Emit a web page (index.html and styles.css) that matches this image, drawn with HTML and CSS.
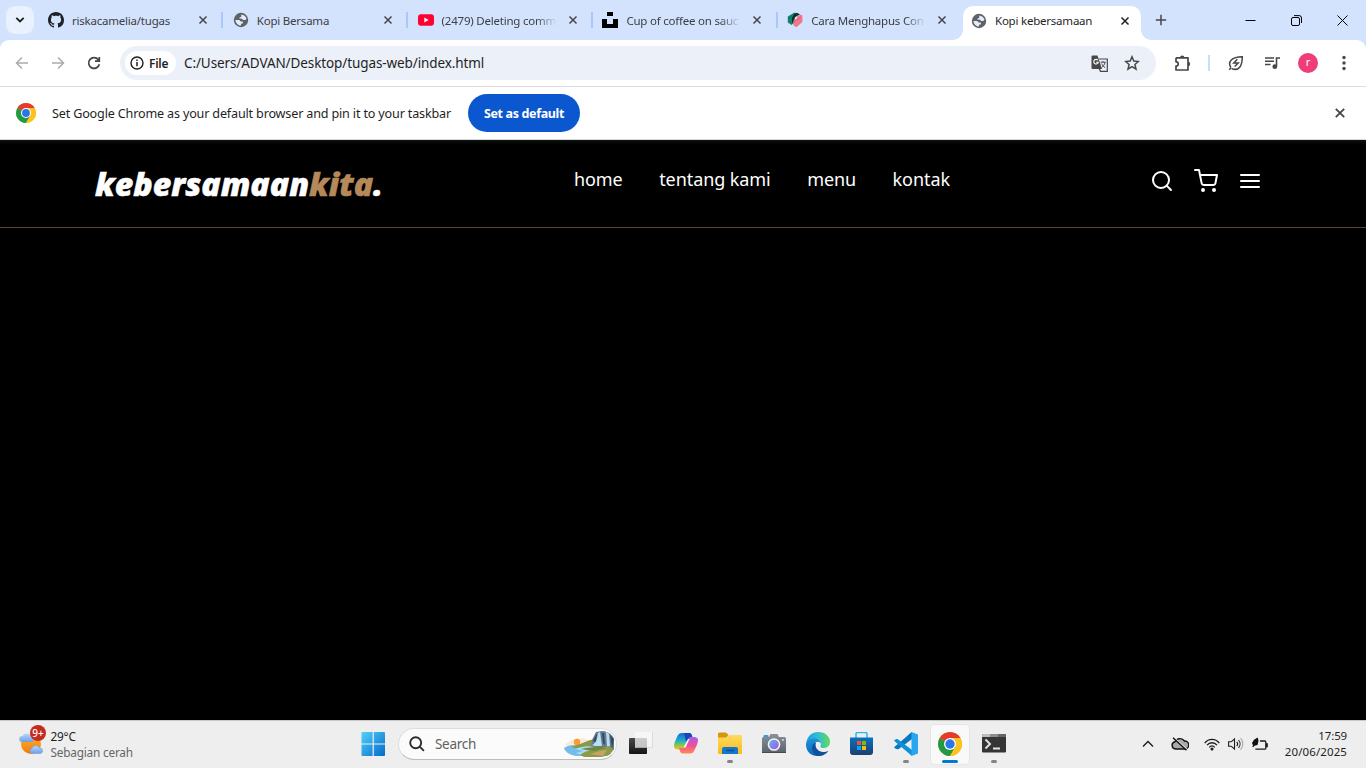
FILE: index.html
```html
<!DOCTYPE html>
<html lang="id">
<head>
<meta charset="utf-8">
<title>Kopi kebersamaan</title>
<link rel="stylesheet" href="styles.css">
</head>
<body>
<svg class="defs" width="0" height="0">
  <defs>
    <linearGradient id="gWin" x1="0" y1="0" x2="1" y2="1"><stop offset="0" stop-color="#4fd3fb"/><stop offset="1" stop-color="#0669c8"/></linearGradient>
    <linearGradient id="gSun" x1="0" y1="0" x2="0" y2="1"><stop offset="0" stop-color="#ffb52c"/><stop offset="1" stop-color="#f27a0c"/></linearGradient>
    <linearGradient id="gCloud" x1="0" y1="0" x2="0" y2="1"><stop offset="0" stop-color="#b9d8fb"/><stop offset="1" stop-color="#6d9fe8"/></linearGradient>
    <linearGradient id="gCopA" x1="0" y1="0" x2="0" y2="1"><stop offset="0" stop-color="#1467d8"/><stop offset=".5" stop-color="#22b3c9"/><stop offset=".75" stop-color="#8fc83c"/><stop offset="1" stop-color="#f4c521"/></linearGradient>
    <linearGradient id="gCopB" x1="0" y1="0" x2="0" y2="1"><stop offset="0" stop-color="#a95cf0"/><stop offset=".5" stop-color="#ee4f9d"/><stop offset="1" stop-color="#ff8a4a"/></linearGradient>
    <linearGradient id="gFold" x1="0" y1="0" x2="0" y2="1"><stop offset="0" stop-color="#ffdb62"/><stop offset="1" stop-color="#f9bb1c"/></linearGradient>
    <linearGradient id="gCam" x1="0" y1="0" x2="0" y2="1"><stop offset="0" stop-color="#8b929b"/><stop offset="1" stop-color="#5a626c"/></linearGradient>
    <linearGradient id="gLens" x1="0" y1="0" x2="1" y2="1"><stop offset="0" stop-color="#59b9f2"/><stop offset="1" stop-color="#a854e0"/></linearGradient>
    <linearGradient id="gEdgeA" x1="0" y1="0" x2="1" y2="0"><stop offset="0" stop-color="#1ba0e0"/><stop offset=".5" stop-color="#30bed0"/><stop offset="1" stop-color="#62dc58"/></linearGradient>
    <linearGradient id="gEdgeB" x1="0" y1="0" x2="0" y2="1"><stop offset="0" stop-color="#1693dc"/><stop offset="1" stop-color="#0e68bb"/></linearGradient>
    <linearGradient id="gStore" x1="0" y1="0" x2="0" y2="1"><stop offset="0" stop-color="#0a72c2"/><stop offset="1" stop-color="#1d3d70"/></linearGradient>
    <linearGradient id="gTaskA" x1="0" y1="0" x2="0" y2="1"><stop offset="0" stop-color="#4a4a4a"/><stop offset="1" stop-color="#141414"/></linearGradient>
    <symbol id="close" viewBox="0 0 10 10"><path d="M1.500 1.500l7 7M8.500 1.500l-7 7" fill="none" stroke="currentColor" stroke-width="1.500"/></symbol>
    <symbol id="globe" viewBox="0 0 16 16"><circle cx="8" cy="8" r="7.200" fill="#5f6368"/><path d="M8.200 2.400c2.500.2 4.600 1.700 5.300 4.100l-1.100 1.400-2.200.1-1.700-1.400-2 .1.100-1.300 1.700-.7zM2.400 8l3.900.1 1.500 1.300 2 .2.200 1.600-1.900.6-.2 1.800C4.800 13.400 2.600 11 2.400 8z" fill="#e3ecfb"/></symbol>
    <symbol id="chrome" viewBox="0 0 24 24">
      <circle cx="12" cy="12" r="12" fill="#fbc116"/>
      <path d="M12 12L1.610 6A12 12 0 0 1 22.390 6z" fill="#e33b2e"/>
      <path d="M12 12L1.610 6A12 12 0 0 0 12 24L17.200 15z" fill="#219a48"/>
      <path d="M12 6h10.400A12 12 0 0 1 12 24l5.200-9z" fill="#fcc31e"/>
      <circle cx="12" cy="12" r="6" fill="#fff"/><circle cx="12" cy="12" r="4.700" fill="#2a75ea"/>
    </symbol>
  </defs>
</svg>

<div class="screen">
  <header class="tabstrip">
    <button class="tab-search"><svg width="10" height="8" viewBox="0 0 10 8"><path d="M1.300 1.800L5 5.500 8.700 1.800" fill="none" stroke="#1f1f1f" stroke-width="1.800"/></svg></button>
    <div class="tabs">
      <div class="tab">
        <svg class="fav" viewBox="0 0 16 16"><path fill="#1f2328" d="M8 0C3.580 0 0 3.580 0 8c0 3.540 2.290 6.530 5.470 7.590.4.070.550-.170.550-.380 0-.190-.010-.820-.010-1.490-2.010.370-2.530-.490-2.690-.940-.090-.230-.480-.940-.820-1.130-.280-.150-.680-.520-.010-.530.630-.010 1.080.580 1.230.820.720 1.210 1.870.870 2.330.660.070-.520.280-.870.510-1.070-1.780-.2-3.640-.890-3.640-3.950 0-.870.310-1.590.820-2.150-.080-.2-.360-1.020.080-2.120 0 0 .670-.210 2.200.820.640-.180 1.320-.270 2-.270s1.360.090 2 .270c1.530-1.040 2.200-.820 2.200-.820.440 1.100.160 1.920.080 2.120.510.560.820 1.270.820 2.150 0 3.070-1.870 3.750-3.650 3.950.290.250.540.730.540 1.480 0 1.070-.010 1.930-.010 2.200 0 .210.150.460.550.380A8.010 8.010 0 0 0 16 8c0-4.420-3.580-8-8-8z"/></svg>
        <span class="tab-title">riskacamelia/tugas</span><svg class="x"><use href="#close"/></svg>
      </div>
      <div class="tab sep">
        <svg class="fav"><use href="#globe"/></svg>
        <span class="tab-title">Kopi Bersama</span><svg class="x"><use href="#close"/></svg>
      </div>
      <div class="tab sep">
        <svg class="fav" viewBox="0 0 16 16"><rect y="2.300" width="16" height="11.400" rx="3" fill="#ff0033"/><path d="M6.300 5.600v4.800L10.600 8z" fill="#fff"/></svg>
        <span class="tab-title fade">(2479) Deleting comm</span><svg class="x"><use href="#close"/></svg>
      </div>
      <div class="tab sep">
        <svg class="fav" viewBox="0 0 16 16"><path d="M5 0h6v4H5zM0 7h5v5h6V7h5v9H0z"/></svg>
        <span class="tab-title fade">Cup of coffee on sauc</span><svg class="x"><use href="#close"/></svg>
      </div>
      <div class="tab sep">
        <svg class="fav" viewBox="0 0 16 16"><path d="M7.500.500l2 1V4L6 6.500v5L4.500 13 .8 10.500v-6z" fill="#12806f"/><path d="M7 2l3-1.300L13 2.500 8 5l-1.500 7L5 10V6z" fill="#102e2b"/><path d="M10 4.500l4-2 1.400 1.200V10l-6 5.200-3-2V8.500l3.600-1.700z" fill="#f0788c"/><path d="M7 9.300l7-4" stroke="#d95670" stroke-width=".8"/></svg>
        <span class="tab-title fade">Cara Menghapus Con</span><svg class="x"><use href="#close"/></svg>
      </div>
      <div class="tab active">
        <svg class="fav"><use href="#globe"/></svg>
        <span class="tab-title">Kopi kebersamaan</span><svg class="x"><use href="#close"/></svg>
      </div>
    </div>
    <svg class="newtab" width="12" height="12" viewBox="0 0 12 12"><path d="M6 .8v10.400M.8 6h10.400" stroke="#474747" stroke-width="1.500"/></svg>
    <div class="window-buttons">
      <svg width="11" height="11" viewBox="0 0 11 11"><path d="M.5 5.500h10" stroke="#000"/></svg>
      <svg width="11" height="11" viewBox="0 0 11 11" fill="none" stroke="#000"><rect x=".5" y="2.500" width="8" height="8" rx="1.500"/><path d="M3 .6h5.200A2.300 2.300 0 0 1 10.500 3v5"/></svg>
      <svg width="11" height="11" viewBox="0 0 11 11"><path d="M.5.500l10 10M10.500.500l-10 10" stroke="#000"/></svg>
    </div>
  </header>

  <div class="toolbar">
    <div class="nav-buttons">
      <svg width="16" height="16" viewBox="0 0 16 16" fill="none" stroke="#ababab" stroke-width="1.500"><path d="M14 8H3M8 2.500L2.500 8 8 13.500"/></svg>
      <svg width="16" height="16" viewBox="0 0 16 16" fill="none" stroke="#ababab" stroke-width="1.500"><path d="M2 8h11M8 2.500L13.500 8 8 13.500"/></svg>
      <svg width="16" height="16" viewBox="0 0 16 16" fill="none" stroke="#474747" stroke-width="1.700"><path d="M13.300 9.200A5.400 5.400 0 1 1 12.300 4.700L13 5.800M13.300 2v4.200H9"/></svg>
    </div>
    <div class="omnibox">
      <div class="chip"><svg width="14" height="14" viewBox="0 0 14 14" fill="none" stroke="#1f1f1f"><circle cx="7" cy="7" r="6" stroke-width="1.400"/><path d="M7 6v4.300M7 3.500v1.400" stroke-width="1.500"/></svg><span>File</span></div>
      <span class="url">C:/Users/ADVAN/Desktop/tugas-web/index.html</span>
      <svg class="translate" width="17" height="17" viewBox="0 0 17 17"><path d="M1.500.500h5L11 14H1.500A1 1 0 0 1 .5 13V1.500a1 1 0 0 1 1-1z" fill="#474747"/><path d="M8 4h8.300v12.300H9.500L8.200 13.500" fill="none" stroke="#474747" stroke-width="1.200"/><path d="M6.900 5.200A2.300 2.300 0 1 0 7.300 7.300H5.200" fill="none" stroke="#fff" stroke-width="1.100"/><path d="M9.500 7.200h5.300M12 6v1.200M14 7.400c-.4 2.200-1.800 4-3.500 5.200M10.700 8.500c.6 1.700 1.800 3.200 3.400 4.200" fill="none" stroke="#474747"/></svg>
      <svg width="16" height="16" viewBox="0 0 16 16"><path d="M8 1.800l1.800 4.300 4.600.4-3.500 3 1.100 4.600L8 11.600l-4 2.500 1.100-4.600-3.500-3 4.600-.4z" fill="none" stroke="#474747" stroke-width="1.500"/></svg>
    </div>
    <svg class="ext" width="18" height="18" viewBox="0 0 18 18"><path d="M2 3.800h5.200M14 3.800v4.500M2 3.800v4c3 .2 3 4 0 4.200v4h12v-4.200V3.800H2" fill="none" stroke="#474747" stroke-width="1.700" stroke-linejoin="round"/><path d="M6 3.800a2.200 2.200 0 0 1 4.400 0zM14 7.700a2.200 2.200 0 0 1 0 4.400z" fill="#474747"/></svg>
    <i class="divider"></i>
    <svg class="leaf" width="16" height="16" viewBox="0 0 16 16" fill="none" stroke="#474747" stroke-width="1.500"><path d="M2.800 12.500C-.5 7 3.500 1.700 14.300 1.700c0 9.300-3.500 14.600-10.300 12M1.200 14.800l2.200-2.200M9.300 4.300L5.800 8h4.400l-3.500 3.500"/></svg>
    <svg class="queue" width="16" height="16" viewBox="0 0 16 16"><path d="M1 3h9M1 6.300h9M1 9.600h5.500" stroke="#474747" stroke-width="1.500"/><path d="M12.500 11.500V3H16" fill="none" stroke="#474747" stroke-width="1.600"/><circle cx="10.800" cy="11.700" r="2.400" fill="#474747"/></svg>
    <span class="avatar">r</span>
    <svg class="kebab" width="4" height="16" viewBox="0 0 4 16" fill="#474747"><circle cx="2" cy="2.500" r="1.700"/><circle cx="2" cy="8" r="1.700"/><circle cx="2" cy="13.500" r="1.700"/></svg>
  </div>

  <div class="infobar">
    <svg width="20" height="20"><use href="#chrome"/></svg>
    <span class="info-text">Set Google Chrome as your default browser and pin it to your taskbar</span>
    <button class="default-btn"><span>Set as default</span></button>
    <svg class="info-close" width="12" height="12"><use href="#close"/></svg>
  </div>

  <main class="page">
    <nav class="navbar">
      <a class="logo">kebersamaan<span>kita</span>.</a>
      <div class="links"><a>home</a><a>tentang kami</a><a>menu</a><a>kontak</a></div>
      <div class="extra">
        <svg viewBox="0 0 24 24"><circle cx="11" cy="11" r="8"/><path d="M21 21L16.650 16.650"/></svg>
        <svg viewBox="0 0 24 24"><circle cx="9" cy="21" r="1"/><circle cx="20" cy="21" r="1"/><path d="M1 1h4l2.680 13.390a2 2 0 0 0 2 1.610h9.720a2 2 0 0 0 2-1.610L23 6H6"/></svg>
        <svg viewBox="0 0 24 24"><path d="M3 6h18M3 12h18M3 18h18"/></svg>
      </div>
    </nav>
  </main>

  <footer class="taskbar">
    <div class="weather">
      <div class="weather-icon">
        <svg width="28" height="28" viewBox="0 0 28 28"><circle cx="13" cy="16" r="10" fill="url(#gSun)"/><path d="M4 14a3 3 0 0 1 .5-6A4.500 4.500 0 0 1 12 7a3.500 3.500 0 0 1 1 7z" fill="url(#gCloud)"/><path d="M13.500 25.500a2.600 2.600 0 0 1 0-4.800 4.300 4.300 0 0 1 8-.7 2.800 2.800 0 0 1 1 5.500z" fill="url(#gCloud)" stroke="#699be3" stroke-width=".5"/></svg>
        <b class="badge">9+</b>
      </div>
      <div class="weather-text"><span>29°C</span><span class="muted">Sebagian cerah</span></div>
    </div>
    <div class="dock">
      <svg class="start" width="24" height="24" viewBox="0 0 24 24" fill="url(#gWin)"><path d="M1.500 0H23a1 1 0 0 1 1 1v22a1 1 0 0 1-1 1H1.500A1 1 0 0 1 .5 23V1a1 1 0 0 1 1-1z"/><path d="M12.200 0v24M0 12h24" stroke="#eef0f2" stroke-width="1.200"/></svg>
      <div class="search">
        <svg width="16" height="16" viewBox="0 0 16 16" fill="none" stroke="#2b2b2b" stroke-width="1.900"><circle cx="6.700" cy="6.700" r="5.500"/><path d="M10.700 10.700l4.200 4.200"/></svg>
        <span>Search</span>
        <svg class="scene" width="52" height="26" viewBox="0 0 52 26">
          <path d="M2 14c4-5 11-6 18-7l13 5v7H12z" fill="#fbe8d6"/><circle cx="14" cy="11" r="3.200" fill="#ff9a2e"/>
          <path d="M1 17c5-4 12-2 18-3l15-1 12 12H13C7 24 2 21 1 17z" fill="#72bdea"/>
          <path d="M8 16l9-3 10-4 8-1 3 8-13 4z" fill="#89994a"/><path d="M29 9l4-8 6-1h7l5 6v13l-7 4-10-8-6 1z" fill="#667b8f"/>
          <path d="M35 2l2-1 2 14h-7l-3-1c3-1 5-5 6-12zM43 0l3 3 1 12-3 1z" fill="#b9dff5"/><path d="M30 10l4-8-1 9zM47 4l4 4-2 10zM39 2h2l1 12-2-2z" fill="#344b5f"/>
          <path d="M12 18c10-4 17-3 22-1l-9 4 6 4H21l-8-3 7-2z" fill="#a9daf4"/><path d="M17 24c7-6 19-6 28-9l6 3-4 6-8 2H21z" fill="#8b9b48"/><path d="M18 18c6-2 13-1 18-3l7 2-12 3z" fill="#6d8642"/><path d="M27 23c7-2 12-4 17-4l-4 6z" fill="#c7a366"/>
        </svg>
      </div>
      <div class="apps">
        <div class="app"><svg viewBox="0 0 24 24"><rect x="0" y="6" width="18" height="16" rx="1" fill="url(#gTaskA)"/><path d="M6 0h17.500v15.500H6z" fill="#f8f8f8" opacity=".75"/><path d="M6 15.500h17.500V0" fill="none" stroke="#ccc" stroke-width=".6"/></svg></div>
        <div class="app"><svg viewBox="0 0 24 24"><path d="M8 1h7c2 0 2.600 1 3.200 3L19 7h-3c-2 0-3 1-3.500 3l-2 5c-.7 2-1.500 2.500-3 2.500H4c-3 0-4-1.500-4-3.500 0-3 2.500-8 4-11C5 1.800 6 1 8 1z" fill="url(#gCopA)"/><path d="M16 21.500H9c-2 0-2.600-1-3.200-3L5 16h3c2 0 3-1 3.500-3L14 7.500C14.700 6 15.500 5 17 5h3c3 0 4 1.500 4 3.500 0 3-2.500 7.500-4 10.500-1 1.800-2 2.500-4 2.500z" fill="url(#gCopB)"/><path d="M10 1h5c2 0 2.600 1 3.200 4h-1.500c-1.500 0-2.300 1-2.700 2L12.500 10C11 7 11 4 10 1z" fill="#1746b5"/><path d="M14 7h1.500l-3.800 8.500H9.500z" fill="#fff" opacity=".9"/></svg></div>
        <div class="app"><svg viewBox="0 0 24 24"><path d="M0 2a1.500 1.500 0 0 1 1.500-1.500H8L10.500 3v3H0z" fill="#d99508"/><path d="M0 5.500h8L10.500 3H23a1 1 0 0 1 1 1v17a1 1 0 0 1-1 1H1a1 1 0 0 1-1-1z" fill="url(#gFold)"/><path d="M4 22v-5a2 2 0 0 1 2-2h12a2 2 0 0 1 2 2v5z" fill="#1378ca"/><path d="M8 18.500h8" stroke="#075393" stroke-width="1.500"/></svg><i class="dot"></i></div>
        <div class="app"><svg viewBox="0 0 24 24"><rect x="1.500" y="3" width="5" height="4" rx="1" fill="#20a4e8"/><path d="M1.500 5H7l1.500-3h7L17 5h5.500A1.500 1.500 0 0 1 24 6.500V21H0V6.500A1.500 1.500 0 0 1 1.500 5z" fill="url(#gCam)"/><path d="M0 20.500h24" stroke="#454b54"/><circle cx="12" cy="12.500" r="6.300" fill="#f5f5f7"/><circle cx="12" cy="12.500" r="4.800" fill="url(#gLens)"/><circle cx="21" cy="8" r="1" fill="#d6dade"/></svg></div>
        <div class="app"><svg class="edge" viewBox="0 0 24 24"><path d="M0 12C1 4 6 0 12 0c8 0 12 5 12 10 0 4-3 6-7 6-2 0-3-1-2.500-2 .4-1 .5-1.500.5-2.300C15 9 12.500 7 9 7c-5 0-9 2.500-9 5z" fill="url(#gEdgeA)"/><path d="M0 12.500C0 8.500 4 6.500 8.500 6.500c4 0 6.500 2.500 6.500 5.300-.5-1.300-1.700-2-3-2-2.500 0-4 2-4 4.500 0 4.500 3.500 7 7.500 9.200C7 25.500 0 21 0 12.500z" fill="url(#gEdgeB)"/><path d="M10 10.500C8 16 13 20 17 20c2.300 0 4-.6 5.500-1.300C20 22.500 16 24 13 24 8 24 6 19.500 6 16c0-2.500 1.500-5 4-5.500z" fill="#0d529b"/></svg></div>
        <div class="app"><svg viewBox="0 0 24 24"><path d="M6 7V2a1.500 1.500 0 0 1 1.500-1.500h8A1.500 1.500 0 0 1 17 2v5" fill="none" stroke="#29b9ef" stroke-width="1.500"/><path d="M0 5.500h23V20a3 3 0 0 1-3 3H3a3 3 0 0 1-3-3z" fill="url(#gStore)"/><path fill="#f35325" d="M7 9h4v4H7z"/><path fill="#81bc06" d="M12 9h4v4h-4z"/><path fill="#05a6f0" d="M7 14h4v4H7z"/><path fill="#ffba08" d="M12 14h4v4h-4z"/></svg></div>
        <div class="app"><svg viewBox="0 0 24 24"><path d="M17.500 0L2 15.500 4 17.500 18 7z" fill="#0878bf"/><path d="M0 15.200l2 1.800h1.500L18 6V0z" fill="#0878bf"/><path d="M0 8.800L2 7h1.500L18 18v6z" fill="#0c91d9"/><path d="M17.500 0L24 2.500v19L17.500 24z" fill="#28a7f0"/></svg><i class="dot"></i></div>
        <div class="app current"><svg viewBox="0 0 24 24"><use href="#chrome"/></svg><i class="dot"></i></div>
        <div class="app"><svg viewBox="0 0 24 24"><rect y="2" width="24" height="18.500" rx="1" fill="#353535"/><path d="M0 5V3a1 1 0 0 1 1-1h7v3z" fill="#bcbcbc"/><path d="M8 2h8v3H8z" fill="#8c8c8c"/><path d="M16 2h7a1 1 0 0 1 1 1v2h-8z" fill="#666"/><path d="M3.500 7.500L8 12l-4.500 4.500M11 16.500h7" stroke="#e3e3e3" stroke-width="1.900" fill="none"/></svg><i class="dot"></i></div>
      </div>
    </div>
    <div class="tray">
      <svg width="12" height="8" viewBox="0 0 12 8"><path d="M1 6.500L6 1.500l5 5" fill="none" stroke="#1a1a1a" stroke-width="1.300"/></svg>
      <svg class="cloud" width="18" height="14" viewBox="0 0 18 14"><path d="M4.500 12A3.700 3.700 0 0 1 4 4.700 5.500 5.500 0 0 1 13.500 4a4 4 0 0 1 .5 8z" fill="#aaa" stroke="#111" stroke-width="1.400"/><path d="M3 .6l13 11.800" stroke="#eee" stroke-width="1.200"/><path d="M2 .8l13.500 12.400" stroke="#111" stroke-width="1.400"/></svg>
      <svg class="wifi" width="16" height="13" viewBox="0 0 16 13" fill="none" stroke="#1d1d1d" stroke-width="1.300"><path d="M.7 5C4.700.2 11.300.2 15.300 5M3 7.200c2.700-3.300 7.300-3.300 10 0M5.300 9.300c1.400-1.800 4-1.800 5.400 0"/><circle cx="8" cy="11" r=".9" fill="#1d1d1d"/></svg>
      <svg class="sound" width="16" height="14" viewBox="0 0 16 14" fill="none" stroke="#1d1d1d" stroke-width="1.100"><path d="M.6 4.800h2.600L6.500 2v10L3.200 9.200H.6zM8.700 4.800a3.300 3.300 0 0 1 0 4.400M10.500 3a6 6 0 0 1 0 8"/><path d="M12.500 1.200a8.500 8.500 0 0 1 0 11.600" stroke="#aaa"/></svg>
      <svg class="battery" width="17" height="14" viewBox="0 0 17 14"><path d="M5 11.500v.7h8.800a1 1 0 0 0 1-1V5a1 1 0 0 0-1-1H9M15 7v2.500h1.200V7z" fill="none" stroke="#1a1a1a" stroke-width="1.300"/><path d="M6.800.5L3 2.800 1 6l1 2.300-.7 1.700h1.200L3.500 8.700 6.500 8 7.500 4z" fill="#111"/></svg>
      <div class="clock"><span>17:59</span><span class="date">20/06/2025</span></div>
    </div>
  </footer>
</div>
</body>
</html>
```

FILE: styles.css
```css
* { box-sizing: border-box; }
body { margin: 0; font-family: "Noto Sans", "Open Sans", sans-serif; font-size: 12px; color: #1f1f1f; overflow: hidden; }
svg { display: block; flex: none; }
.defs { position: absolute; }
button { border: 0; padding: 0; font: inherit; }
span { white-space: nowrap; }
.screen { width: 1366px; height: 768px; display: flex; flex-direction: column; }

.tabstrip { height: 40px; background: #d3e3fd; display: flex; align-items: center; padding-left: 6px; }
.tab-search { width: 28px; height: 28px; border-radius: 9px; background: #e9f1fe; display: flex; align-items: center; justify-content: center; }
.tabs { display: flex; align-self: stretch; margin-left: 4px; }
.tab { width: 184.800px; height: 40px; display: flex; align-items: center; padding-left: 10px; color: #3d4043; background: no-repeat; }
.tab.sep { background-image: linear-gradient(#a8c7fa, #a8c7fa); background-size: 2px 16px; background-position: 0 12px; margin-left: -1.500px; padding-left: 11.500px; width: 186.300px; }
.fav { width: 16px; height: 16px; }
.tab-title { width: 115px; margin-left: 8px; overflow: hidden; line-height: 18px; padding-top: 1px; font-size: 11.500px; letter-spacing: -.22px; }
.fade { -webkit-mask-image: linear-gradient(90deg, #000 82%, transparent); mask-image: linear-gradient(90deg, #000 82%, transparent); }
.x { width: 10px; height: 10px; margin-left: 11px; color: #444746; }
.tab.active { width: 178px; height: 34px; margin-top: 6px; margin-left: 1px; padding: 0 0 5px 8px; background: #fff; border-radius: 10px 10px 0 0; color: #1f1f1f; position: relative; }
.tab.active .x { color: #1f1f1f; margin-left: 10px; }
.tab.active::before, .tab.active::after { content: ""; position: absolute; bottom: 0; width: 10px; height: 10px; }
.tab.active::before { left: -10px; background: radial-gradient(circle at 0 0, transparent 9.500px, #fff 10px); }
.tab.active::after { right: -10px; background: radial-gradient(circle at 100% 0, transparent 9.500px, #fff 10px); }
.newtab { margin-left: 14px; }
.window-buttons { display: flex; gap: 35px; margin-left: auto; margin-right: 18px; }

.toolbar { height: 47px; border-bottom: 1px solid #dcdedd; background: linear-gradient(#d3e3fd, #d3e3fd) 0 0 / 100% 10px no-repeat; display: flex; align-items: center; position: relative; isolation: isolate; }
.toolbar::before { content: ""; position: absolute; inset: 0; background: #fff; border-radius: 9px 9px 0 0; z-index: -1; }
.nav-buttons { display: flex; gap: 20px; margin-left: 14px; }
.omnibox { width: 1036px; height: 34px; margin-left: 18px; border-radius: 17px; background: #ecf0f9; display: flex; align-items: center; padding: 0 16px 0 5px; }
.chip { width: 51px; height: 24px; border-radius: 12px; background: #fff; display: flex; align-items: center; gap: 5px; padding-left: 5px; font-weight: 600; letter-spacing: -.25px; }
.url { margin-left: 8px; font-size: 13.500px; letter-spacing: -.1px; padding-bottom: 1px; }
.translate { margin-left: auto; margin-right: 16px; }
.omnibox svg:last-child { margin-right: 0; }
.ext { margin-left: 18px; }
.divider { width: 2px; height: 16px; background: #c9defc; margin-left: 16px; }
.leaf { margin-left: 18px; }
.queue { margin-left: 20px; }
.avatar { width: 20px; height: 20px; border-radius: 50%; background: #ee3d78; color: #fff; text-align: center; line-height: 18px; font-size: 11px; margin-left: 18px; }
.kebab { margin-left: 24px; }

.infobar { height: 53px; border-bottom: 1px solid #d9dad8; background: #fff; display: flex; align-items: center; padding-left: 16px; }
.info-text { width: 400px; margin-left: 16px; font-size: 12.600px; letter-spacing: -.17px; }
.default-btn { width: 112px; height: 38px; border-radius: 19px; margin-left: 16px; background: #0b57d0; color: #fff; font-size: 12.500px; font-weight: 700; letter-spacing: -.35px; }
.info-close { margin-left: auto; margin-right: 20px; color: #444; }

.page { flex: 1; background: linear-gradient(#0c0f0f, #000 5px); }
.navbar { height: 88px; border-bottom: 1px solid #5b4630; display: flex; align-items: flex-start; padding-left: 95px; color: #fff; }
.logo { width: 288px; margin-top: 22px; font: italic 800 32px/44px "Open Sans", sans-serif; letter-spacing: 0; -webkit-text-stroke: .5px; white-space: nowrap; }
.logo span { color: #b6895b; }
.links { display: flex; width: 380px; gap: 36.500px; margin-left: 191px; margin-top: 26px; font-size: 18px; line-height: 26px; letter-spacing: -.08px; white-space: nowrap; }
.extra { display: flex; gap: 20px; margin-left: 196px; margin-top: 29px; }
.extra svg { width: 24px; height: 24px; fill: none; stroke: #fff; stroke-width: 2; stroke-linecap: round; stroke-linejoin: round; }

.taskbar { height: 48px; background: #eee; border-top: 1px solid #c8c8c8; display: flex; align-items: center; padding-bottom: 1px; }
.weather { display: flex; width: 361px; padding-left: 18px; }
.weather-icon { width: 28px; position: relative; }
.badge { position: absolute; left: 12px; top: -3px; width: 16px; height: 16px; border-radius: 50%; background: #c42b1c; color: #fff; font-size: 10px; font-weight: 500; line-height: 16px; text-align: center; }
.weather-text, .clock { display: flex; flex-direction: column; line-height: 16px; }
.weather-text { margin-left: 4.500px; font-size: 11.800px; letter-spacing: -.2px; }
.muted { color: #666; }
.dock { display: flex; align-items: center; }
.search { width: 219px; height: 32px; margin-left: 13px; border-radius: 16px; border: 1px solid #ddd; border-bottom-color: #bdbdbd; background: #fbfbfb; display: flex; align-items: center; padding-left: 10px; color: #606060; font-size: 13.500px; letter-spacing: -.3px; }
.search span { margin-left: 10px; }
.scene { margin-left: auto; margin-right: 1px; border-radius: 0 14px 14px 0; }
.apps { display: flex; margin-left: 3px; }
.app { width: 44px; height: 46px; display: grid; place-items: center; position: relative; }
.app svg { width: 24px; height: 24px; }
.app:first-child svg { margin-right: 3px; }
.dot { position: absolute; left: 19px; bottom: 4px; width: 6px; height: 3px; border-radius: 2px; background: #858585; }
.current::before { content: ""; position: absolute; z-index: -1; inset: 4px 3px 3px; border-radius: 4px; background: #f9f9f9; box-shadow: 0 0 0 1px #e6e6e6; }
.current { isolation: isolate; }
.current .dot { left: 14px; width: 16px; background: #0078d4; }
.tray { display: flex; align-items: center; margin-left: auto; padding-right: 19px; }
.cloud { margin-left: 17px; }
.wifi { margin-left: 15px; }
.sound { margin-left: 8px; }
.battery { margin-left: 7px; }
.clock { width: 63px; margin-left: 17px; text-align: right; align-items: flex-end; font-size: 11.500px; letter-spacing: -.15px; }
.date { letter-spacing: .1px; }
.tray > svg { position: relative; left: 1px; }
```
